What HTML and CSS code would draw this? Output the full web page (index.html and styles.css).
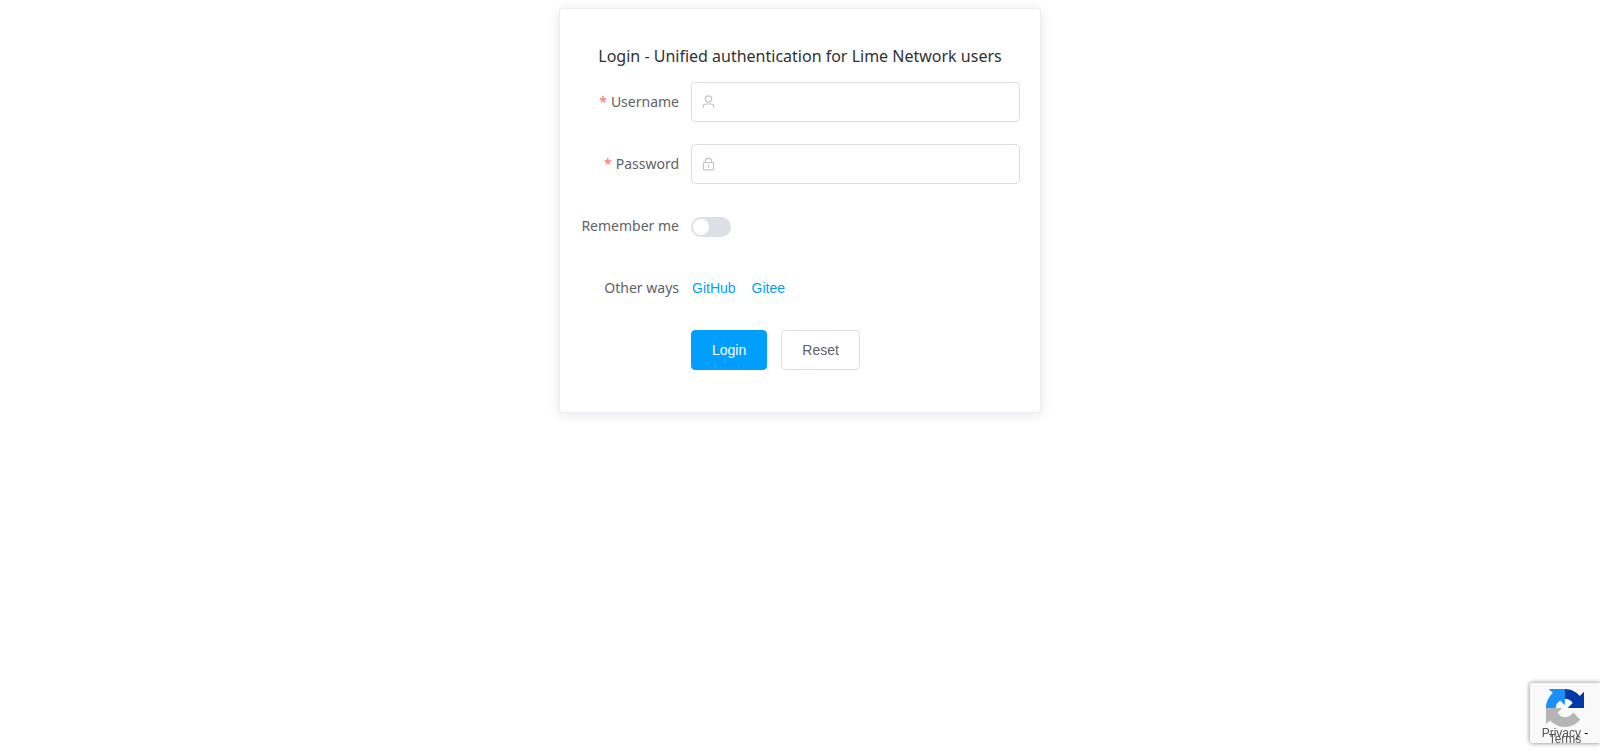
FILE: index.html
```
<!DOCTYPE html>
<html lang="en">
<head>
    <meta charset="UTF-8">
    <meta name="viewport" content="width=device-width, initial-scale=1.0">
    <title>Login - Lime Network</title>
    <link rel="stylesheet" href="styles.css">
</head>
<body>
    <div class="card">
        <h1 class="title">Login - Unified authentication for Lime Network users</h1>
        <form class="login-form">
            <label class="label required" for="username">Username</label>
            <div class="input-box">
                <svg class="icon" viewBox="0 0 14 14" aria-hidden="true">
                    <circle cx="6.5" cy="4" r="3.2"/>
                    <path d="M1.3 12.8v-1.2a2.6 2.6 0 0 1 2.6-2.6h5.2a2.6 2.6 0 0 1 2.6 2.6v1.2"/>
                </svg>
                <input type="text" id="username" name="username" required>
            </div>

            <label class="label required" for="password">Password</label>
            <div class="input-box">
                <svg class="icon" viewBox="0 0 14 14" aria-hidden="true">
                    <rect x="1.5" y="5.5" width="10" height="7.3" rx="0.6"/>
                    <path d="M3.4 5.5V4.2a3.1 3.1 0 0 1 6.2 0v1.3M6.5 7.5v3.3"/>
                </svg>
                <input type="password" id="password" name="password" required>
            </div>

            <label class="label" for="remember">Remember me</label>
            <div class="field">
                <input type="checkbox" class="switch" id="remember" name="remember">
            </div>

            <span class="label">Other ways</span>
            <div class="field links">
                <a href="#github">GitHub</a>
                <a href="#gitee">Gitee</a>
            </div>

            <div class="field buttons">
                <button type="submit" class="btn btn-primary">Login</button>
                <button type="reset" class="btn">Reset</button>
            </div>
        </form>
    </div>

    <div class="captcha-badge">
        <svg class="captcha-logo" viewBox="0 0 64 64" aria-hidden="true">
            <path fill="#003aa9" d="M64 31.955l-.033-1.37V4.687l-7.16 7.16C50.948 4.674 42.033.093 32.05.093c-10.4 0-19.622 4.96-25.458 12.64l11.736 11.86a15.55 15.55 0 0 1 4.754-5.334c2.05-1.6 4.952-2.906 8.968-2.906.485 0 .86.057 1.135.163 4.976.393 9.288 3.14 11.828 7.124l-8.307 8.307L64 31.953"/>
            <path fill="#1b90fa" d="M31.862.094l-1.37.033H4.594l7.16 7.16C4.58 13.147 0 22.06 0 32.046c0 10.4 4.96 19.622 12.64 25.458L24.5 45.768a15.55 15.55 0 0 1-5.334-4.754c-1.6-2.05-2.906-4.952-2.906-8.968 0-.485.057-.86.163-1.135.393-4.976 3.14-9.288 7.124-11.828l8.307 8.307L31.86.095"/>
            <path fill="#b5b5b5" d="M.001 32.045l.033 1.37v25.898l7.16-7.16c5.86 7.173 14.774 11.754 24.76 11.754 10.4 0 19.622-4.96 25.458-12.64l-11.736-11.86a15.55 15.55 0 0 1-4.754 5.334c-2.05 1.6-4.952 2.906-8.968 2.906-.485 0-.86-.057-1.135-.163-4.976-.393-9.288-3.14-11.828-7.124l8.307-8.307c-10.522.04-22.4.066-27.295-.005"/>
        </svg>
        <div class="captcha-links">
            <a href="#privacy">Privacy</a>
            <span class="dash">-</span>
            <a href="#terms">Terms</a>
        </div>
    </div>
</body>
</html>
```
FILE: styles.css
```
body {
    box-sizing: border-box;
    min-height: 100vh;
    margin: 0;
    padding: 8px 0;
    font-family: "Noto Sans", "Segoe UI", sans-serif;
    background: #fff;
    color: #303133;
}

.card {
    width: 30%;
    min-width: 460px;
    margin: 0 auto;
    border: 1px solid #ebeef5;
    border-radius: 4px;
    background: #fff;
    box-shadow: 0 2px 12px 0 rgba(0, 0, 0, 0.1);
}

.title {
    margin: 0;
    padding: 34px 20px 13px;
    font-size: 16px;
    line-height: 26px;
    font-weight: 400;
    text-align: center;
    white-space: nowrap;
}

.login-form {
    display: grid;
    grid-template-columns: 99px 1fr;
    gap: 22px 12px;
    padding: 0 20px 42px;
}

.label {
    font-size: 14px;
    line-height: 40px;
    color: #606266;
    text-align: right;
    white-space: nowrap;
}

.required::before {
    content: "*";
    color: #ff6b6b;
    margin-right: 4px;
}

.input-box {
    display: flex;
    align-items: center;
    box-sizing: border-box;
    height: 40px;
    padding: 0 10px;
    border: 1px solid #dcdfe6;
    border-radius: 4px;
}

.input-box:focus-within {
    border-color: #009fff;
}

.input-box input {
    flex: 1;
    min-width: 0;
    padding: 0 6px;
    border: none;
    outline: none;
    background: none;
    font-size: 14px;
    color: #606266;
}

.icon {
    width: 14px;
    height: 14px;
    fill: none;
    stroke: #c0c4cc;
    stroke-width: 1.2;
}

.field {
    display: flex;
    align-items: center;
    height: 40px;
}

.switch {
    appearance: none;
    width: 40px;
    height: 20px;
    margin: 2px 0 0;
    padding: 2px;
    border-radius: 10px;
    background: #dcdfe6;
    cursor: pointer;
}

.switch::before {
    content: "";
    display: block;
    width: 16px;
    height: 16px;
    border-radius: 50%;
    background: #fff;
}

.switch:checked {
    background: #009fff;
}

.switch:checked::before {
    margin-left: 20px;
}

.links {
    gap: 16px;
    padding-left: 1px;
    font-family: "Liberation Sans", Arial, sans-serif;
    font-size: 14px;
}

.links a {
    color: #009fff;
    text-decoration: none;
}

.buttons {
    grid-column: 2;
    gap: 14px;
}

.btn {
    height: 40px;
    padding: 0 20px;
    border: 1px solid #dcdfe6;
    border-radius: 4px;
    background: #fff;
    color: #606266;
    font-family: "Liberation Sans", Arial, sans-serif;
    font-size: 14px;
    cursor: pointer;
}

.btn-primary {
    border-color: #009fff;
    background: #009fff;
    color: #fff;
}

.captcha-badge {
    position: fixed;
    right: 0;
    bottom: 12px;
    display: flex;
    flex-direction: column;
    align-items: center;
    box-sizing: border-box;
    width: 70px;
    height: 60px;
    padding-top: 6px;
    border-radius: 2px 0 0 2px;
    background: #f9f9f9;
    box-shadow: 0 0 5px gray;
}

.captcha-logo {
    width: 38px;
    height: 38px;
}

.captcha-links {
    width: 54px;
    margin-top: 3px;
    font-family: "Liberation Sans", Arial, sans-serif;
    font-size: 12px;
    line-height: 6px;
    text-align: center;
}

.captcha-links a {
    color: #555;
    text-decoration: none;
}

.dash {
    color: #000;
}
```
